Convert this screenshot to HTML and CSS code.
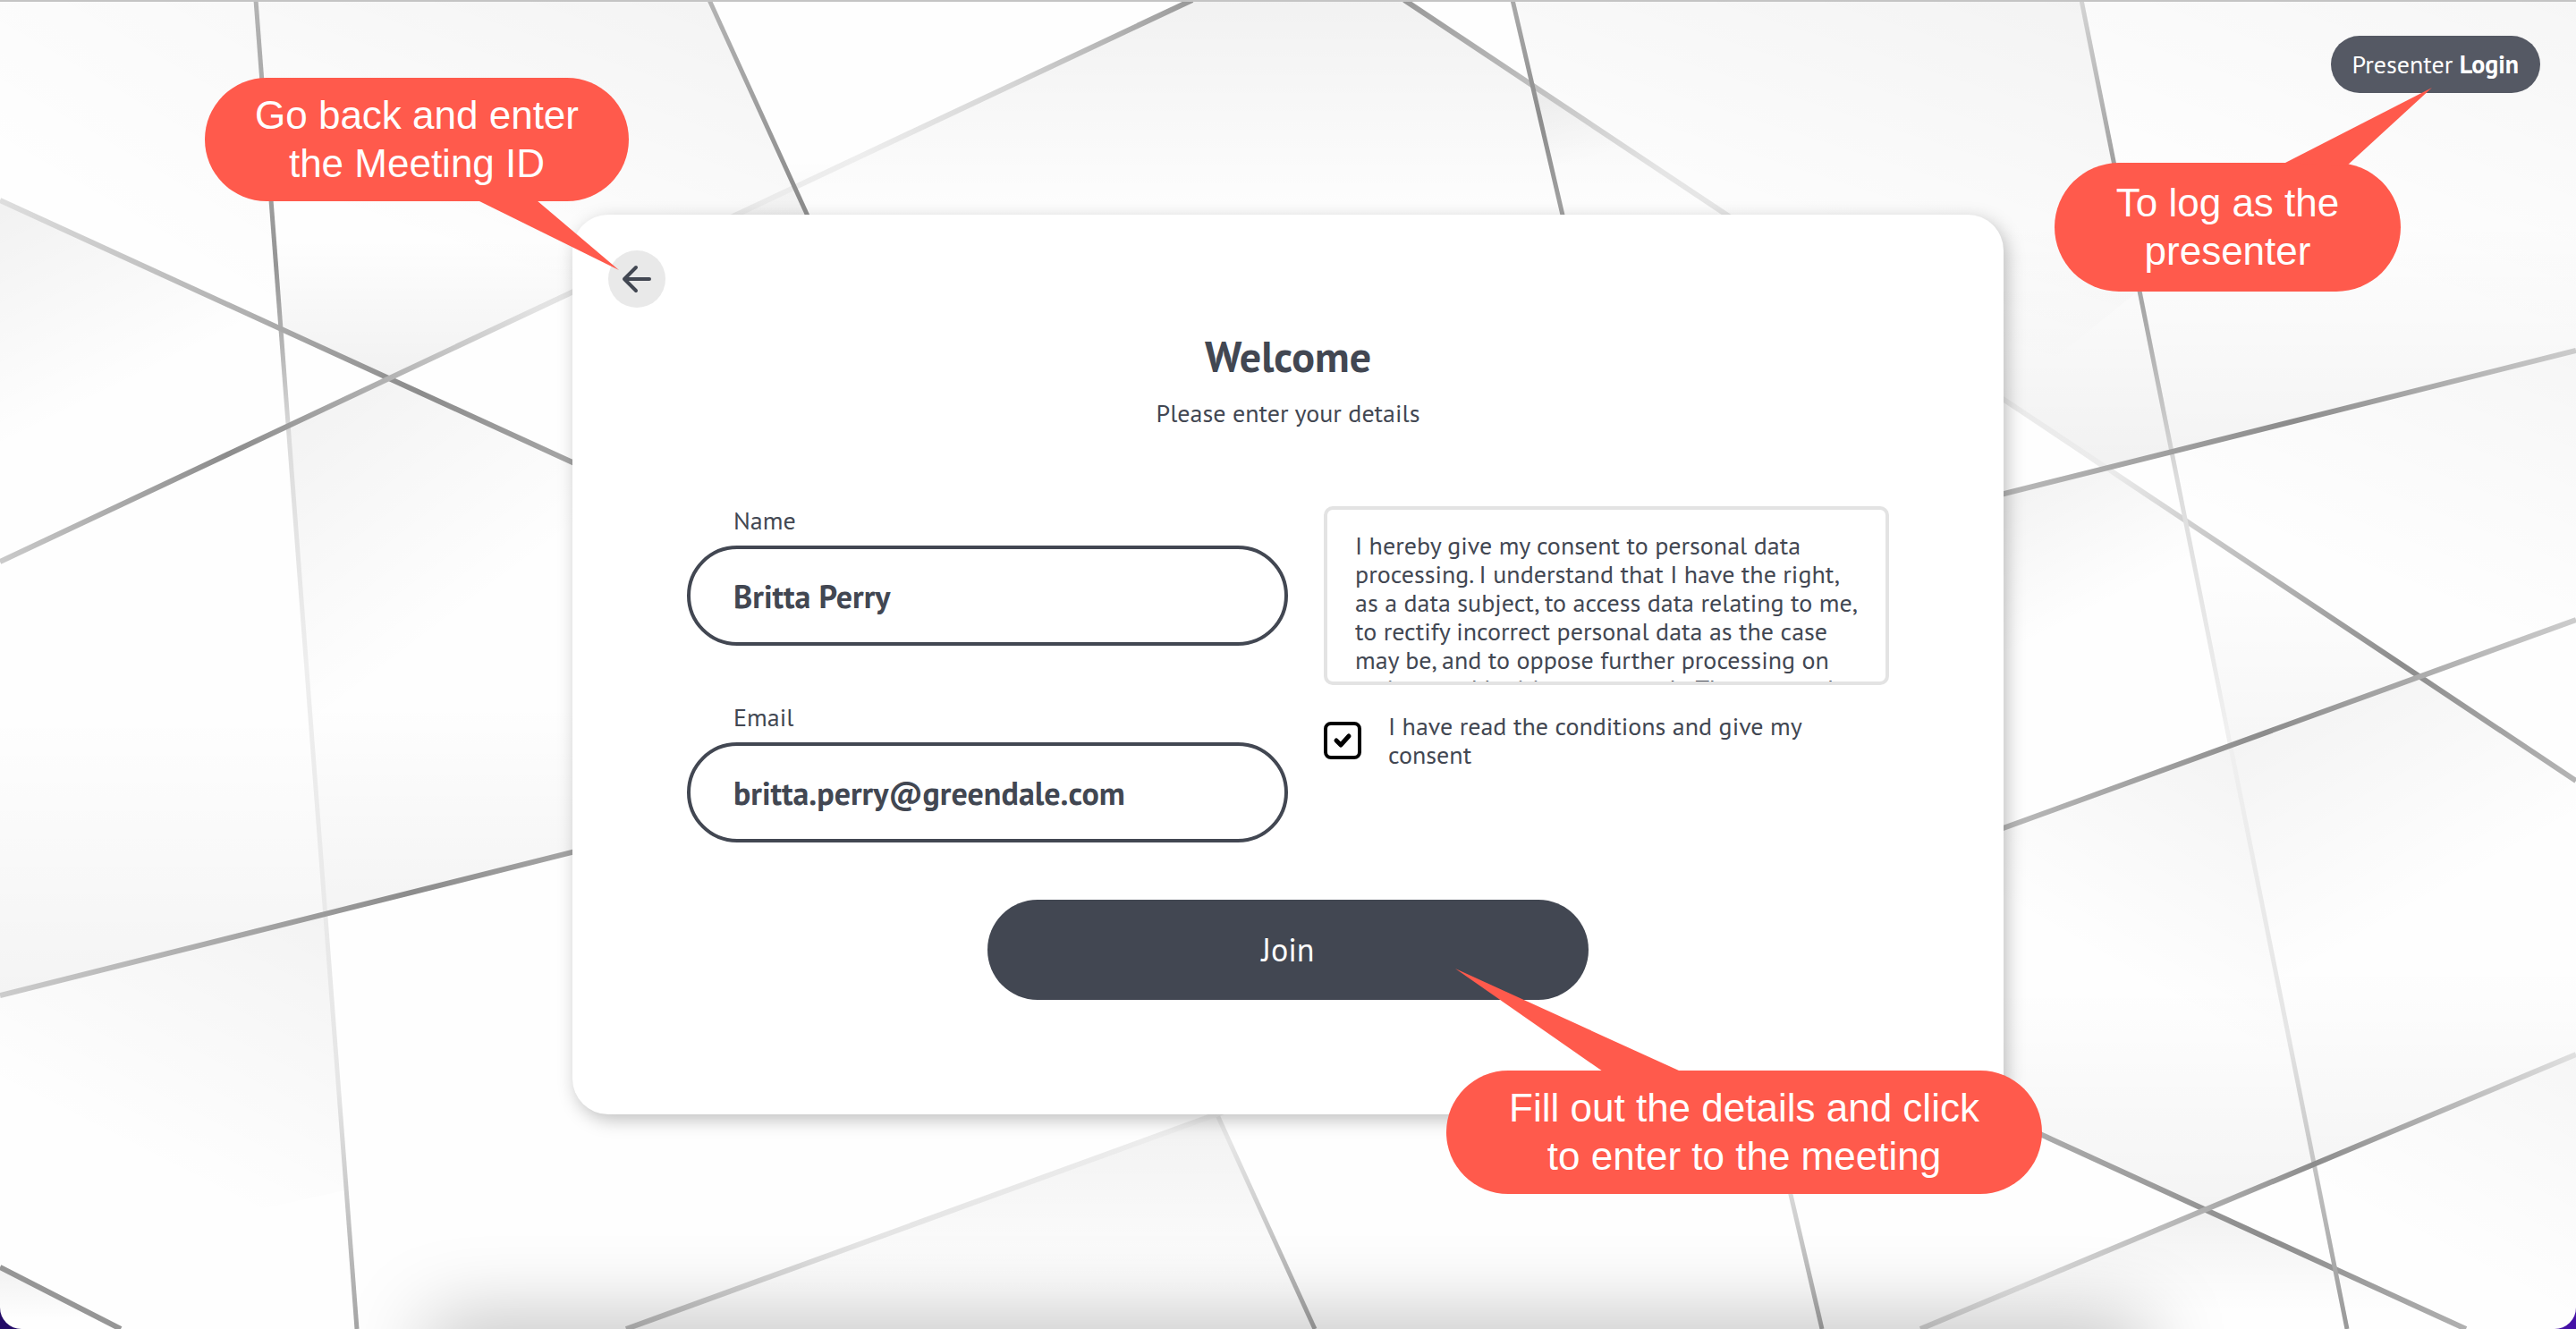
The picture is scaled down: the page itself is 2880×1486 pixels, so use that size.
FILE: index.html
```html
<!DOCTYPE html>
<html lang="en">
<head>
<meta charset="utf-8">
<meta name="viewport" content="width=device-width, initial-scale=1">
<title>Join meeting</title>
<link rel="stylesheet" href="styles.css">
</head>
<body>
<div class="page">
  <svg class="backdrop" viewBox="0 0 2880 1486" preserveAspectRatio="none" aria-hidden="true">
    <defs>
      <linearGradient id="down" x1="0" y1="0" x2="0" y2="1"><stop offset="0" stop-opacity=".05"/><stop offset=".85" stop-opacity="0"/></linearGradient>
      <linearGradient id="up" x1="0" y1="1" x2="0" y2="0"><stop offset="0" stop-opacity=".05"/><stop offset=".85" stop-opacity="0"/></linearGradient>
      <linearGradient id="downleft" x1="1" y1="0" x2=".5" y2="1"><stop offset="0" stop-opacity=".045"/><stop offset=".8" stop-opacity="0"/></linearGradient>
      <linearGradient id="downright" x1="0" y1="0" x2=".4" y2="1"><stop offset="0" stop-opacity=".05"/><stop offset=".6" stop-opacity="0"/></linearGradient>
      <linearGradient id="l1" gradientUnits="userSpaceOnUse" x1="286" y1="0" x2="399" y2="1486"><stop offset="0" stop-color="#b4b4b4"/><stop offset=".2" stop-color="#959595"/><stop offset=".33" stop-color="#dcdcdc"/><stop offset=".5" stop-color="#eee"/><stop offset=".82" stop-color="#e6e6e6"/><stop offset="1" stop-color="#a5a5a5"/></linearGradient>
      <linearGradient id="l2" gradientUnits="userSpaceOnUse" x1="0" y1="224" x2="2757" y2="1486"><stop offset="0" stop-color="#dedede"/><stop offset=".1" stop-color="#b0b0b0"/><stop offset=".17" stop-color="#8c8c8c"/><stop offset=".23" stop-color="#a5a5a5"/><stop offset=".8" stop-color="#b4b4b4"/><stop offset=".92" stop-color="#8c8c8c"/><stop offset="1" stop-color="#b0b0b0"/></linearGradient>
      <linearGradient id="l3" gradientUnits="userSpaceOnUse" x1="0" y1="628" x2="1333" y2="0"><stop offset="0" stop-color="#cacaca"/><stop offset=".19" stop-color="#8c8c8c"/><stop offset=".33" stop-color="#b4b4b4"/><stop offset=".45" stop-color="#e2e2e2"/><stop offset=".72" stop-color="#eee"/><stop offset=".85" stop-color="#d4d4d4"/><stop offset="1" stop-color="#999"/></linearGradient>
      <linearGradient id="l4" gradientUnits="userSpaceOnUse" x1="793" y1="0" x2="1470" y2="1486"><stop offset="0" stop-color="#b4b4b4"/><stop offset=".15" stop-color="#8c8c8c"/><stop offset=".4" stop-color="#e5e5e5"/><stop offset=".86" stop-color="#e5e5e5"/><stop offset="1" stop-color="#a5a5a5"/></linearGradient>
      <linearGradient id="l5" gradientUnits="userSpaceOnUse" x1="1570" y1="0" x2="2880" y2="873"><stop offset="0" stop-color="#999"/><stop offset=".1" stop-color="#bcbcbc"/><stop offset=".22" stop-color="#e5e5e5"/><stop offset=".6" stop-color="#ececec"/><stop offset=".7" stop-color="#c4c4c4"/><stop offset=".85" stop-color="#8c8c8c"/><stop offset="1" stop-color="#b4b4b4"/></linearGradient>
      <linearGradient id="l6" gradientUnits="userSpaceOnUse" x1="1691" y1="0" x2="2037" y2="1486"><stop offset="0" stop-color="#aaa"/><stop offset=".09" stop-color="#8c8c8c"/><stop offset=".3" stop-color="#ccc"/><stop offset=".88" stop-color="#e2e2e2"/><stop offset="1" stop-color="#a5a5a5"/></linearGradient>
      <linearGradient id="l7" gradientUnits="userSpaceOnUse" x1="2327" y1="0" x2="2624" y2="1486"><stop offset="0" stop-color="#d4d4d4"/><stop offset=".14" stop-color="#999"/><stop offset=".24" stop-color="#a9a9a9"/><stop offset=".36" stop-color="#dcdcdc"/><stop offset=".55" stop-color="#f0f0f0"/><stop offset=".78" stop-color="#e5e5e5"/><stop offset="1" stop-color="#999"/></linearGradient>
      <linearGradient id="l8" gradientUnits="userSpaceOnUse" x1="0" y1="1113" x2="2880" y2="392"><stop offset="0" stop-color="#ccc"/><stop offset=".16" stop-color="#8c8c8c"/><stop offset=".25" stop-color="#b0b0b0"/><stop offset=".78" stop-color="#b8b8b8"/><stop offset=".89" stop-color="#8c8c8c"/><stop offset="1" stop-color="#ccc"/></linearGradient>
      <linearGradient id="l9" gradientUnits="userSpaceOnUse" x1="700" y1="1486" x2="2880" y2="693"><stop offset="0" stop-color="#bcbcbc"/><stop offset=".12" stop-color="#e4e4e4"/><stop offset=".3" stop-color="#eee"/><stop offset=".7" stop-color="#bcbcbc"/><stop offset=".84" stop-color="#8c8c8c"/><stop offset="1" stop-color="#ccc"/></linearGradient>
      <linearGradient id="l10" gradientUnits="userSpaceOnUse" x1="2147" y1="1486" x2="2880" y2="1179"><stop offset="0" stop-color="#d2d2d2"/><stop offset=".15" stop-color="#e0e0e0"/><stop offset=".43" stop-color="#b0b0b0"/><stop offset=".6" stop-color="#8c8c8c"/><stop offset="1" stop-color="#e0e0e0"/></linearGradient>
    </defs>

    <!-- facets -->
    <path fill="url(#downleft)" d="M0 0H286L315 368L0 224Z" opacity=".5"/>
    <path fill="url(#downleft)" d="M286 0H793L904 240L640 326L432 422L315 368Z"/>
    <path fill="url(#up)" d="M305 240H813L432 422L315 368Z"/>
    <path fill="url(#downright)" d="M0 224L315 368L322 476L0 628Z"/>
    <path fill="url(#downright)" d="M322 476L432 422L640 518V953L364 1022Z"/>
    <path fill="url(#up)" d="M343 743H640V953L364 1022Z" opacity=".8"/>
    <path fill="url(#up)" d="M0 743H343L364 1022L0 1113Z" opacity=".8"/>
    <path fill="url(#downleft)" d="M0 1113L364 1022L390 1330L0 1417Z"/>
    <path fill="url(#down)" d="M0 1417L135 1486H0Z"/>
    <path fill="url(#up)" d="M820 240L980 168L872 168L904 240Z" opacity=".6"/>
    <path fill="url(#down)" d="M1333 0H1570L1920 233V300H820V240Z"/>
    <path fill="url(#downright)" d="M1713 95L1930 240H1748Z"/>
    <path fill="url(#downleft)" d="M1691 0H2327L2391 325L2240 447L1713 95Z"/>
    <path fill="url(#downleft)" d="M2327 0H2880V392L2391 325Z" opacity=".7"/>
    <path fill="url(#up)" d="M2240 200L2366 200L2428 505L2350 524L2240 447Z"/>
    <path fill="url(#up)" d="M2380 270L2880 200V392L2428 505Z" opacity=".8"/>
    <path fill="url(#downright)" d="M2240 552L2350 524L2444 582L2475 743L2240 830Z"/>
    <path fill="url(#downleft)" d="M2428 505L2880 392V693L2684 743L2444 582Z" opacity=".7"/>
    <path fill="url(#up)" d="M2447 582L2684 743L2707 757L2496 833Z" opacity=".6"/>
    <path fill="url(#downleft)" d="M2240 926L2496 833L2560 1170L2240 1200Z"/>
    <path fill="url(#downright)" d="M2496 833L2707 757L2880 873V1179L2587 1305Z"/>
    <path fill="url(#up)" d="M2240 1060L2540 1060L2587 1305L2464 1354L2240 1251Z" opacity=".8"/>
    <path fill="url(#up)" d="M2536 1040L2880 1040V1179L2587 1305Z" opacity=".7"/>
    <path fill="url(#down)" d="M2147 1486L2464 1354L2757 1486Z"/>
    <path fill="url(#downleft)" d="M2587 1305L2880 1179V1486H2757L2606 1418Z" opacity=".7"/>
    <path fill="url(#down)" d="M1361 1246L700 1486H1470Z"/>

    <!-- seams -->
    <g fill="none" stroke-width="6">
      <path stroke="url(#l1)" stroke-width="5" d="M286 0L399 1486"/>
      <path stroke="url(#l2)" d="M0 224L2757 1486"/>
      <path stroke="url(#l3)" d="M0 628L1333 0"/>
      <path stroke="url(#l4)" stroke-width="5" d="M793 0L1470 1486"/>
      <path stroke="url(#l5)" d="M1570 0L2880 873"/>
      <path stroke="url(#l6)" stroke-width="5" d="M1691 0L2037 1486"/>
      <path stroke="url(#l7)" stroke-width="5" d="M2327 0L2624 1486"/>
      <path stroke="url(#l8)" d="M0 1113L2880 392"/>
      <path stroke="url(#l9)" d="M700 1486L2880 693"/>
      <path stroke="url(#l10)" d="M2147 1486L2880 1179"/>
      <path stroke="#969696" d="M0 1417L135 1486"/>
    </g>
  </svg>

  <header class="topbar">
    <button class="login" type="button">Presenter <strong>Login</strong></button>
    <p class="callout callout-login">
      <svg class="tail" width="164" height="90" viewBox="0 0 164 90" aria-hidden="true"><path d="M0 84L164 0L68 88Z"/></svg>
      To log as the<br>presenter
    </p>
  </header>

  <main class="card">
    <button class="back" type="button" aria-label="Back">
      <svg width="64" height="64" viewBox="0 0 64 64" aria-hidden="true"><path d="M46 32H18M31 19L18 32L31 45"/></svg>
    </button>
    <h1 class="title">Welcome</h1>
    <p class="subtitle">Please enter your details</p>

    <form class="form">
      <div class="fields">
        <div class="field">
          <label for="name">Name</label>
          <input id="name" type="text" value="Britta Perry">
        </div>
        <div class="field">
          <label for="email">Email</label>
          <input id="email" type="email" value="britta.perry@greendale.com">
        </div>
      </div>
      <div class="consent">
        <div class="terms">I hereby give my consent to personal data processing. I understand that I have the right, as a data subject, to access data relating to me, to rectify incorrect personal data as the case may be, and to oppose further processing on serious and legitimate grounds. The personal</div>
        <div class="agree">
          <input id="agree" type="checkbox" checked>
          <label for="agree">I have read the conditions and give my consent</label>
        </div>
      </div>
      <button class="join" type="submit">Join</button>
    </form>

    <p class="callout callout-back">
      <svg class="tail" width="160" height="80" viewBox="0 0 160 80" aria-hidden="true"><path d="M0 0L158 78L66 0Z"/></svg>
      Go back and enter<br>the Meeting ID
    </p>
    <p class="callout callout-join">
      <svg class="tail" width="250" height="116" viewBox="0 0 250 116" aria-hidden="true"><path d="M0 0L165 115H252Z"/></svg>
      Fill out the details and click<br>to enter to the meeting
    </p>
  </main>
</div>
</body>
</html>
```
FILE: styles.css
```css
:root {
  --ink: #424752;
  --coral: #ff5a4c;
}

* {
  box-sizing: border-box;
}

body {
  margin: 0;
  background: linear-gradient(90deg, #220a66, #4411a6);
  color: var(--ink);
  font: 28px/32px "PT Sans", Lato, sans-serif;
}

h1,
p {
  margin: 0;
}

button,
input {
  margin: 0;
  color: inherit;
  font: inherit;
}

.page {
  position: relative;
  display: grid;
  align-items: center;
  justify-items: center;
  min-height: 100vh;
  padding: 120px 40px;
  overflow: hidden;
  border-radius: 0 0 24px 24px;
  background: #fefefe;
}

/* hairline under the browser chrome */
.page::before {
  content: "";
  position: absolute;
  z-index: 1;
  top: 0;
  right: 0;
  left: 0;
  height: 2px;
  background: #c4c4c4;
}

/* dock shadow along the bottom edge */
.page::after {
  content: "";
  position: absolute;
  right: 17%;
  bottom: -60px;
  left: 17%;
  height: 60px;
  box-shadow: 0 0 90px 10px rgba(0, 0, 0, 0.26);
}

.backdrop {
  position: absolute;
  inset: 0;
  width: 100%;
  height: 100%;
}

.topbar {
  position: absolute;
  top: 40px;
  right: 40px;
}

.login {
  height: 64px;
  padding: 0 24px;
  border: 0;
  border-radius: 32px;
  background: #555964;
  color: #fff;
}

.card {
  position: relative;
  display: flex;
  flex-direction: column;
  width: 100%;
  max-width: 1600px;
  padding: 40px 128px 128px;
  border-radius: 40px;
  background: #fff;
  box-shadow: 4px 6px 20px rgba(0, 0, 0, 0.25);
}

.back {
  width: 64px;
  height: 64px;
  margin: 0 0 26px -88px;
  padding: 0;
  border: 0;
  border-radius: 50%;
  background: #e9e9e9;
}

.back svg {
  display: block;
  fill: none;
  stroke: var(--ink);
  stroke-width: 4;
  stroke-linecap: round;
  stroke-linejoin: round;
}

.title {
  font-size: 48px;
  line-height: 56px;
  text-align: center;
}

.subtitle {
  margin: 20px 0 88px;
  text-align: center;
}

.form {
  display: grid;
  grid-template-columns: 672fr 632fr;
  gap: 64px 40px;
}

.fields {
  display: grid;
  gap: 64px;
}

.field {
  display: grid;
  gap: 12px;
}

.field label {
  padding-left: 52px;
}

.field input {
  width: 100%;
  height: 112px;
  padding: 0 48px;
  border: 4px solid var(--ink);
  border-radius: 56px;
  background: #fff;
  font-size: 36px;
  font-weight: 700;
}

.terms {
  height: 200px;
  padding: 24px 24px 24px 31px;
  overflow: auto;
  border: 4px solid #e3e3e3;
  border-radius: 10px;
  scrollbar-width: none;
}

.agree {
  display: flex;
  align-items: center;
  gap: 30px;
  margin-top: 30px;
  padding-right: 60px;
}

.agree input {
  flex: none;
  width: 42px;
  height: 42px;
  border: 4px solid #000;
  border-radius: 8px;
  appearance: none;
  background: #fff url("data:image/svg+xml,%3Csvg xmlns='http://www.w3.org/2000/svg' viewBox='0 0 34 34'%3E%3Cpath d='M10 17l5 5 9-10' fill='none' stroke='%23000' stroke-width='5' stroke-linecap='round' stroke-linejoin='round'/%3E%3C/svg%3E") center / 100% no-repeat;
}

.join {
  grid-column: 1 / -1;
  justify-self: center;
  width: 50%;
  height: 112px;
  border: 0;
  border-radius: 56px;
  background: var(--ink);
  color: #fff;
  font-size: 36px;
}

.callout {
  position: absolute;
  display: flex;
  align-items: center;
  justify-content: center;
  border-radius: 72px;
  background: var(--coral);
  color: #fff;
  font: 44px/54px "Liberation Sans", Arial, sans-serif;
  text-align: center;
  white-space: nowrap;
}

.tail {
  position: absolute;
  fill: var(--coral);
}

.callout-back {
  top: -153px;
  left: -411px;
  width: 474px;
  height: 138px;
}

.callout-back .tail {
  top: 137px;
  left: 305px;
}

.callout-login {
  top: 142px;
  right: 156px;
  width: 387px;
  height: 144px;
}

.callout-login .tail {
  top: -84px;
  left: 258px;
}

.callout-join {
  top: 957px;
  right: -43px;
  width: 666px;
  height: 138px;
}

.callout-join .tail {
  top: -114px;
  left: 10px;
}
```
